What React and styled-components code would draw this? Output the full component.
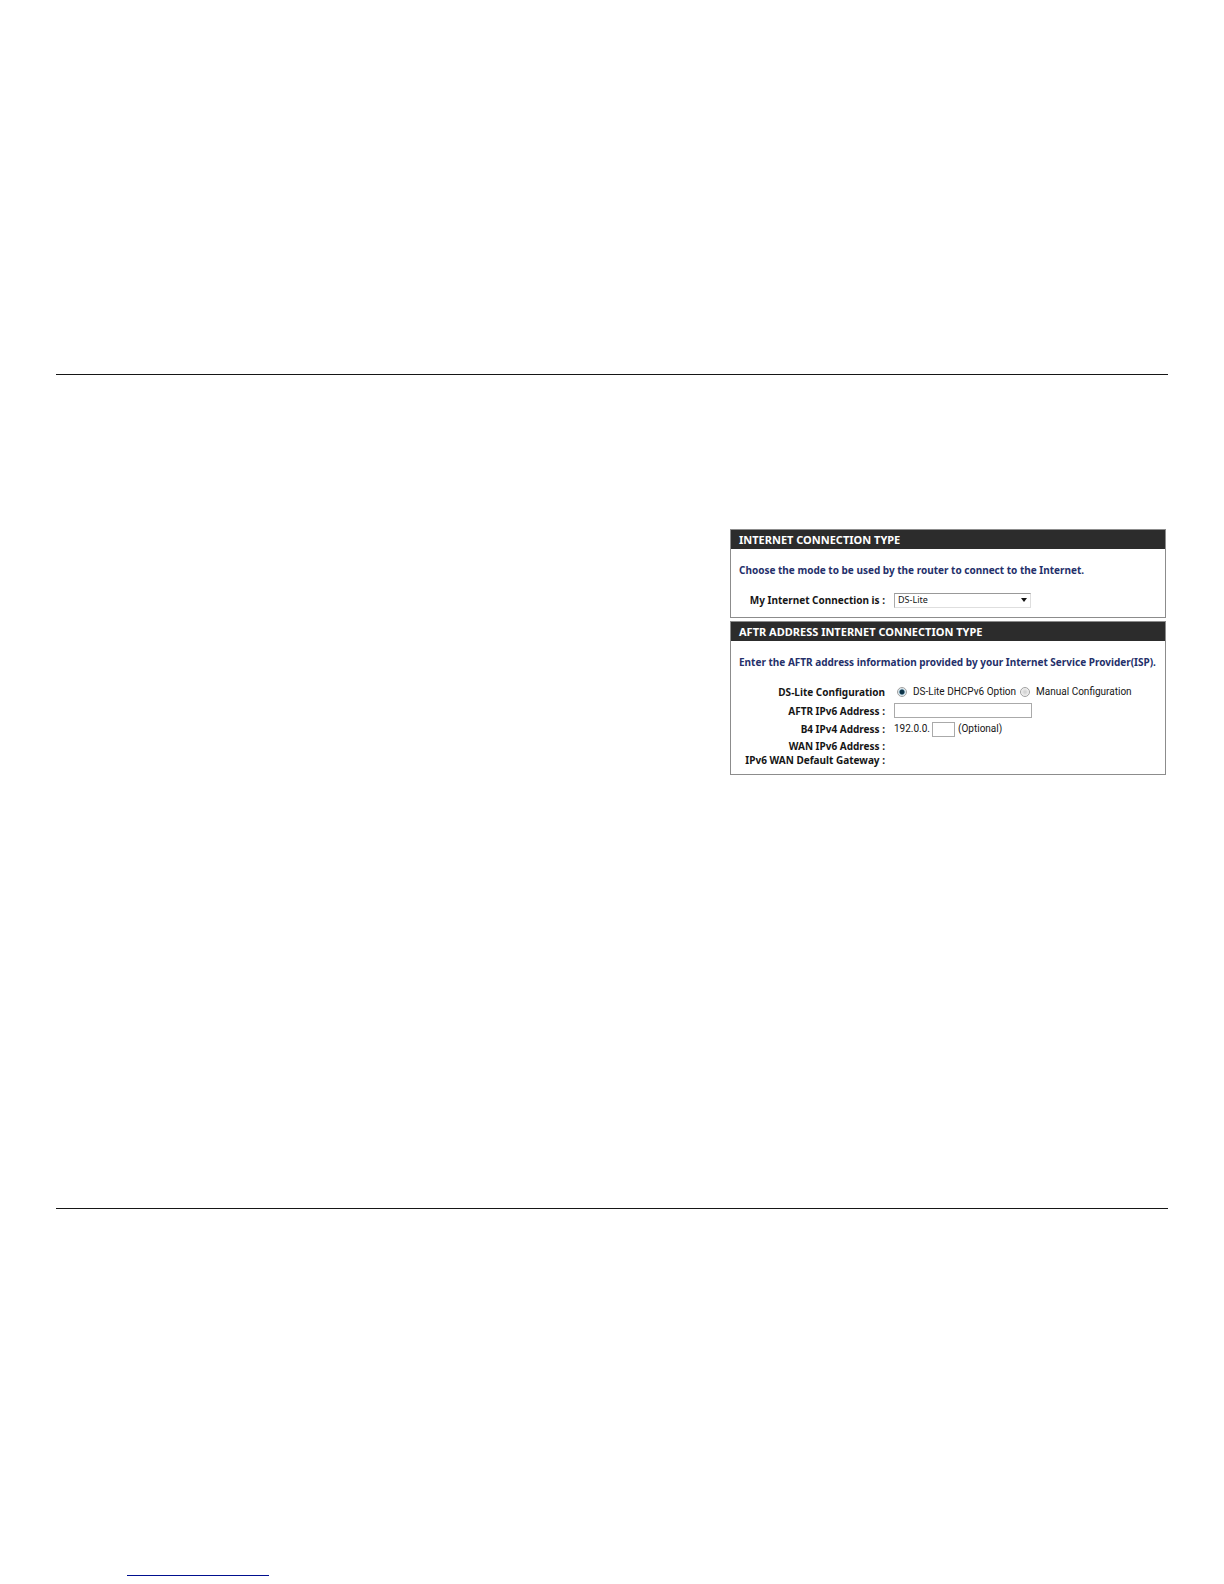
import React, { useState } from 'react';
import styled, { createGlobalStyle } from 'styled-components';

const GlobalStyle = createGlobalStyle`
    * {
        box-sizing: border-box;
    }

    body {
        margin: 0;
        background: #fff;
        color: #161616;
        font-family: 'Noto Sans', sans-serif;
        font-size: 10px;
        line-height: 14px;
    }
`;

const App = () => {
    const [connection, setConnection] = useState('DS-Lite');
    const [mode, setMode] = useState('dhcp');
    const [aftr, setAftr] = useState('');
    const [b4, setB4] = useState('');

    return (
        <Page>
            <GlobalStyle />
            <Main>
                <Panels>
                    <Panel>
                        <Title>INTERNET CONNECTION TYPE</Title>
                        <Body>
                            <Description>
                                Choose the mode to be used by the router to connect to the Internet.
                            </Description>
                            <Row $height={20}>
                                <Label htmlFor="connection">My Internet Connection is :</Label>
                                <SelectBox>
                                    <Select
                                        id="connection"
                                        value={connection}
                                        onChange={(e) => setConnection(e.target.value)}
                                    >
                                        <option>DS-Lite</option>
                                    </Select>
                                    <Caret viewBox="0 0 6 4" aria-hidden="true">
                                        <path d="M0 0h6L3 4z" fill="#111" />
                                    </Caret>
                                </SelectBox>
                            </Row>
                        </Body>
                    </Panel>
                    <Panel>
                        <Title>AFTR ADDRESS INTERNET CONNECTION TYPE</Title>
                        <Body>
                            <Description>
                                Enter the AFTR address information provided by your Internet Service Provider(ISP).
                            </Description>
                            <Row $height={20} role="radiogroup" aria-labelledby="mode-label">
                                <Label as="span" id="mode-label">DS-Lite Configuration</Label>
                                <Options>
                                    <Option>
                                        <Radio
                                            name="mode"
                                            checked={mode === 'dhcp'}
                                            onChange={() => setMode('dhcp')}
                                        />
                                        DS-Lite DHCPv6 Option
                                    </Option>
                                    <Option>
                                        <Radio
                                            name="mode"
                                            checked={mode === 'manual'}
                                            onChange={() => setMode('manual')}
                                        />
                                        Manual Configuration
                                    </Option>
                                </Options>
                            </Row>
                            <Row $height={17}>
                                <Label htmlFor="aftr">AFTR IPv6 Address :</Label>
                                <Input id="aftr" $width={138} value={aftr} onChange={(e) => setAftr(e.target.value)} />
                            </Row>
                            <Row $height={20}>
                                <Label htmlFor="b4">B4 IPv4 Address :</Label>
                                <Inline>
                                    <span>192.0.0.</span>
                                    <Input id="b4" $width={23} value={b4} onChange={(e) => setB4(e.target.value)} />
                                    <Hint>(Optional)</Hint>
                                </Inline>
                            </Row>
                            <Row $height={14}>
                                <Label as="span">WAN IPv6 Address :</Label>
                            </Row>
                            <Row $height={14}>
                                <Label as="span">IPv6 WAN Default Gateway :</Label>
                            </Row>
                        </Body>
                    </Panel>
                </Panels>
            </Main>
            <Footer>
                <FooterLink href="#top" aria-label="Back to top" />
            </Footer>
        </Page>
    );
};

const Page = styled.div`
    display: flex;
    flex-direction: column;
    min-height: 100vh;
    padding: 374px 56px 8px;
`;

const Main = styled.main`
    display: grid;
    grid-template-columns: minmax(0, 674fr) minmax(0, 436fr);
    align-items: start;
    min-height: 835px;
    padding: 154px 2px 0 0;
    border-top: 1px solid #161616;
    border-bottom: 1px solid #161616;
`;

const Panels = styled.div`
    display: flex;
    grid-column: 2;
    flex-direction: column;
    gap: 3px;
`;

const Panel = styled.section`
    border: 1px solid #8c8c8c;
`;

const Title = styled.h2`
    margin: 0;
    padding: 3px 8px 2px;
    background: #2c2c2c;
    color: #fff;
    font-size: 11px;
    line-height: 14px;
`;

const Body = styled.div`
    padding: 14px 8px 7px;
`;

const Description = styled.p`
    margin: 0 0 13px;
    color: #24306a;
    font-weight: bold;
    white-space: nowrap;
`;

const Row = styled.div`
    display: grid;
    grid-template-columns: 146px 1fr;
    align-items: center;
    column-gap: 9px;
    min-height: ${({ $height }) => $height}px;
`;

const Label = styled.label`
    font-weight: bold;
    text-align: right;
    white-space: nowrap;
`;

const SelectBox = styled.div`
    display: flex;
    align-items: center;
    width: 137px;
`;

const Select = styled.select`
    flex: none;
    width: 100%;
    height: 15px;
    padding: 0 3px;
    border: 1px solid #dedede;
    border-top-color: #999;
    border-left-color: #aaa;
    border-radius: 0;
    appearance: none;
    background: #fff;
    color: #161616;
    font-family: inherit;
    font-size: 9px;
    line-height: 12px;
`;

const Caret = styled.svg`
    flex: none;
    width: 6px;
    height: 4px;
    margin-left: -10px;
    pointer-events: none;
`;

const Input = styled.input`
    width: ${({ $width }) => $width}px;
    height: 15px;
    padding: 0 2px;
    border: 1px solid #aaa;
    border-radius: 0;
    font-family: inherit;
    font-size: 9px;
`;

const Inline = styled.div`
    display: flex;
    align-items: center;
    gap: 2px;
    font-family: Roboto, sans-serif;
    line-height: 16px;
`;

const Hint = styled.span`
    margin-left: 1px;
`;

const Options = styled.div`
    display: flex;
    gap: 4px;
    padding-left: 3px;
    font-family: Roboto, sans-serif;
    line-height: 16px;
    white-space: nowrap;
`;

const Option = styled.label`
    display: flex;
    align-items: center;
    gap: 6px;
`;

const Radio = styled.input.attrs({ type: 'radio' })`
    width: 10px;
    height: 10px;
    margin: 0;
    border: 1px solid #a0a0a0;
    border-radius: 50%;
    appearance: none;
    background: radial-gradient(circle, #d4d4d4 1px, #f4f4f4 4px);

    &:checked {
        background: radial-gradient(circle, #0d3448 2px, #bcd8e6 3px, #f4f4f4 4px);
    }
`;

const Footer = styled.footer`
    margin-top: auto;
    padding-left: 71px;
`;

const FooterLink = styled.a`
    display: block;
    width: 142px;
    height: 14px;
    border-bottom: 1px solid #000f8f;
`;

export default App;
